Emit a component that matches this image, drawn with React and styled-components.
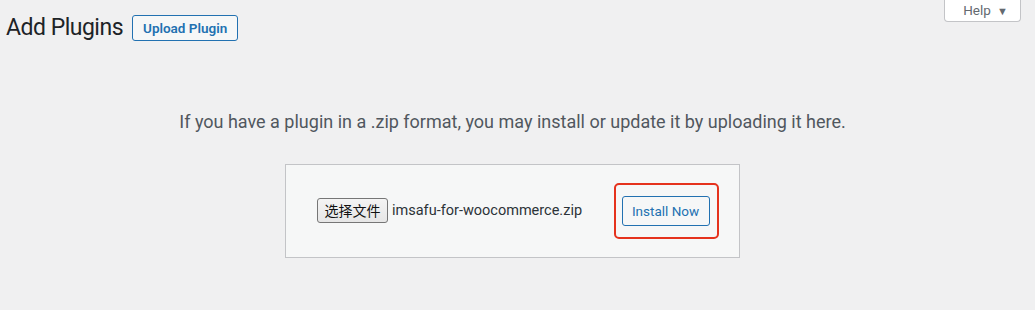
import React from "react";
import styled, { createGlobalStyle } from "styled-components";

const Global = createGlobalStyle`
  html, body { margin: 0; padding: 0; background: #f0f0f1; }
  body {
    font-family: Roboto, "Noto Sans", "Noto Sans CJK SC", sans-serif;
    color: #1d2327;
    width: 1035px;
    height: 310px;
    overflow: hidden;
  }
`;

const Page = styled.div`
  position: relative;
  width: 1025px;
  height: 310px;
`;

const HelpTab = styled.button`
  position: absolute;
  top: 0;
  right: 4px;
  width: 77px;
  height: 22px;
  box-sizing: border-box;
  border: 1px solid #c3c4c7;
  border-top: none;
  border-radius: 0 0 4px 4px;
  background: #fff;
  color: #646970;
  font-family: Roboto, "Noto Sans", sans-serif;
  font-size: 13.5px;
  padding: 0 0 0 6px;
  display: flex;
  align-items: center;
  justify-content: center;
  gap: 6px;
  line-height: 1;
`;

const Caret = styled.span`
  font-size: 11px;
  color: #646970;
  transform: translateY(1px);
`;

const Header = styled.div`
  display: flex;
  align-items: center;
  padding: 12px 0 0 6px;
  gap: 9px;
`;

const Title = styled.h1`
  margin: 0;
  font-size: 23px;
  font-weight: 400;
  color: #1d2327;
  line-height: 32px;
  letter-spacing: -0.5px;
`;

const ActionButton = styled.a`
  display: inline-flex;
  align-items: center;
  height: 26px;
  box-sizing: border-box;
  padding: 0 10px;
  border: 1px solid #2271b1;
  border-radius: 3px;
  background: #f6f7f7;
  color: #2271b1;
  font-size: 13.5px;
  font-weight: 600;
  text-decoration: none;
  margin-top: -1px;
`;

const Upload = styled.div`
  display: flex;
  flex-direction: column;
  align-items: center;
`;

const HelpText = styled.p`
  margin: 66px 0 0;
  font-size: 18px;
  color: #50575e;
  line-height: 24px;
`;

const Form = styled.form`
  margin-top: 30px;
  width: 455px;
  height: 94px;
  box-sizing: border-box;
  background: #f6f7f7;
  border: 1px solid #c3c4c7;
  display: flex;
  align-items: center;
  justify-content: space-between;
  padding: 0 20px 0 31px;
`;

const FileField = styled.div`
  display: flex;
  align-items: center;
  gap: 4px;
  margin-top: -2px;
`;

const FileButton = styled.span`
  display: inline-flex;
  align-items: center;
  justify-content: center;
  width: 71px;
  height: 25px;
  box-sizing: border-box;
  border: 1px solid #767676;
  border-radius: 3px;
  background: linear-gradient(#f4f4f4, #e6e6e6);
  font-family: "Noto Sans CJK SC", sans-serif;
  font-size: 14px;
  color: #111;
`;

const FileName = styled.span`
  font-size: 14.5px;
  color: #2c3338;
`;

const Highlight = styled.div`
  width: 105px;
  height: 56px;
  box-sizing: border-box;
  border: 2.5px solid #e5321d;
  border-radius: 5px;
  display: flex;
  align-items: center;
  justify-content: center;
`;

const InstallButton = styled.button`
  width: 88px;
  height: 30px;
  box-sizing: border-box;
  border: 1px solid #2271b1;
  border-radius: 3px;
  background: #f6f7f7;
  color: #2271b1;
  font-family: Roboto, "Noto Sans", sans-serif;
  font-size: 13.5px;
  padding: 0;
  margin-left: -2px;
`;

export default function App() {
  return (
    <>
      <Global />
      <Page>
        <HelpTab type="button">
          Help <Caret>▼</Caret>
        </HelpTab>
        <Header>
          <Title>Add Plugins</Title>
          <ActionButton href="#">Upload Plugin</ActionButton>
        </Header>
        <Upload>
          <HelpText>
            If you have a plugin in a .zip format, you may install or update it by uploading it here.
          </HelpText>
          <Form onSubmit={(e) => e.preventDefault()}>
            <FileField>
              <FileButton>选择文件</FileButton>
              <FileName>imsafu-for-woocommerce.zip</FileName>
            </FileField>
            <Highlight>
              <InstallButton type="submit">Install Now</InstallButton>
            </Highlight>
          </Form>
        </Upload>
      </Page>
    </>
  );
}
